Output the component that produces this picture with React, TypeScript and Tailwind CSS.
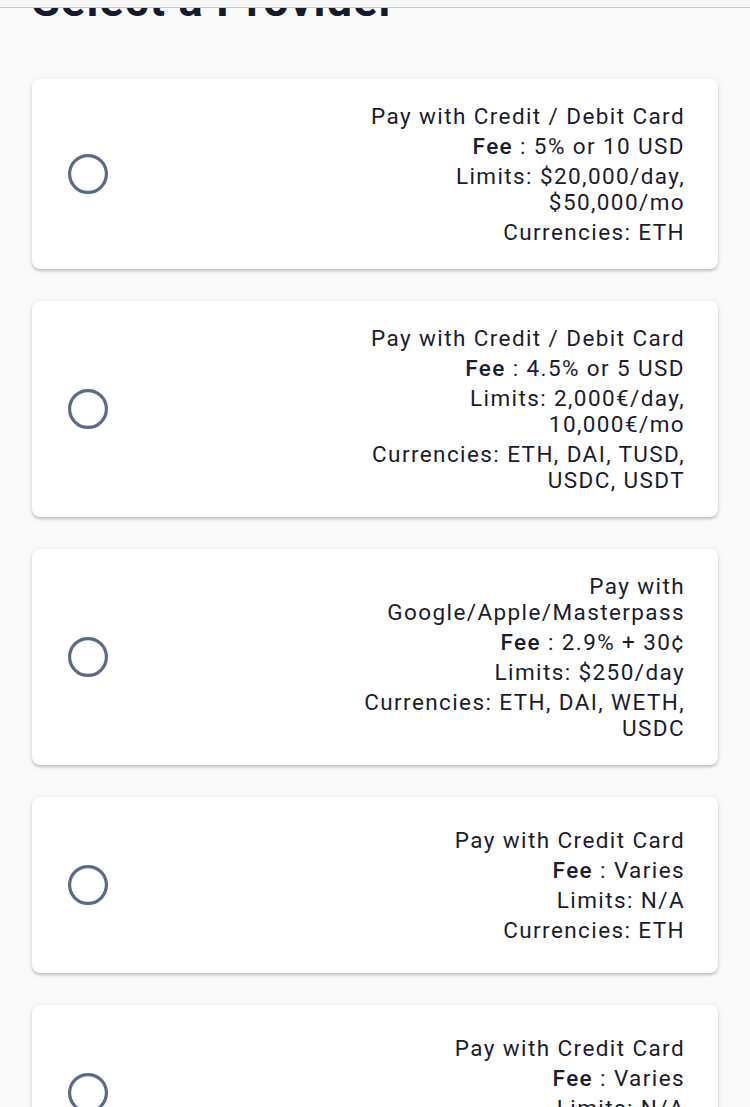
import React from "react";

type Provider = {
  title: string[];
  fee: string;
  limits: string[];
  currencies: string[];
};

const providers: Provider[] = [
  {
    title: ["Pay with Credit / Debit Card"],
    fee: "5% or 10 USD",
    limits: ["Limits: $20,000/day,", "$50,000/mo"],
    currencies: ["Currencies: ETH"],
  },
  {
    title: ["Pay with Credit / Debit Card"],
    fee: "4.5% or 5 USD",
    limits: ["Limits: 2,000€/day,", "10,000€/mo"],
    currencies: ["Currencies: ETH, DAI, TUSD,", "USDC, USDT"],
  },
  {
    title: ["Pay with", "Google/Apple/Masterpass"],
    fee: "2.9% + 30¢",
    limits: ["Limits: $250/day"],
    currencies: ["Currencies: ETH, DAI, WETH,", "USDC"],
  },
  {
    title: ["Pay with Credit Card"],
    fee: "Varies",
    limits: ["Limits: N/A"],
    currencies: ["Currencies: ETH"],
  },
  {
    title: ["Pay with Credit Card"],
    fee: "Varies",
    limits: ["Limits: N/A"],
    currencies: ["Currencies: ETH"],
  },
];

function Lines({ lines }: { lines: string[] }) {
  return (
    <p className="m-0">
      {lines.map((l, i) => (
        <span key={i} className="block">
          {l}
        </span>
      ))}
    </p>
  );
}

function RadioIcon() {
  return (
    <svg width="48" height="48" viewBox="0 0 24 24" className="shrink-0">
      <circle cx="12" cy="12" r="9.2" fill="none" stroke="#5b6a85" strokeWidth="1.6" />
    </svg>
  );
}

export default function App() {
  return (
    <div
      className="relative h-[1107px] bg-[#fafafa] overflow-hidden"
      style={{ fontFamily: "Roboto, 'Liberation Sans', sans-serif" }}
    >
      <div className="absolute top-0 left-0 right-0 h-[8px] bg-[#f7f7f7] border-b border-[#c9c9c9] z-10" />
      <h1 className="mt-[-23px] ml-[32px] text-[45px] leading-[48px] font-bold text-[#151a2d] tracking-[1.2px]">
        Select a Provider
      </h1>
      <div className="flex flex-col gap-[32px] px-[32px] mt-[54px] pb-10">
        {providers.map((p, i) => (
          <div
            key={i}
            className="flex items-center justify-between bg-white rounded-[8px] min-h-[176px] pl-[32px] pr-[33px] py-[24px] shadow-[0_2px_3px_rgba(0,0,0,0.22),0_0_8px_rgba(0,0,0,0.05)]"
          >
            <RadioIcon />
            <div className="flex flex-col gap-[4px] text-right text-[22.5px] leading-[26px] text-[#1a1d2e] tracking-[1.4px]">
              <Lines lines={p.title} />
              <p className="m-0">
                <span className="font-medium">Fee</span> : {p.fee}
              </p>
              <Lines lines={p.limits} />
              <Lines lines={p.currencies} />
            </div>
          </div>
        ))}
      </div>
    </div>
  );
}
